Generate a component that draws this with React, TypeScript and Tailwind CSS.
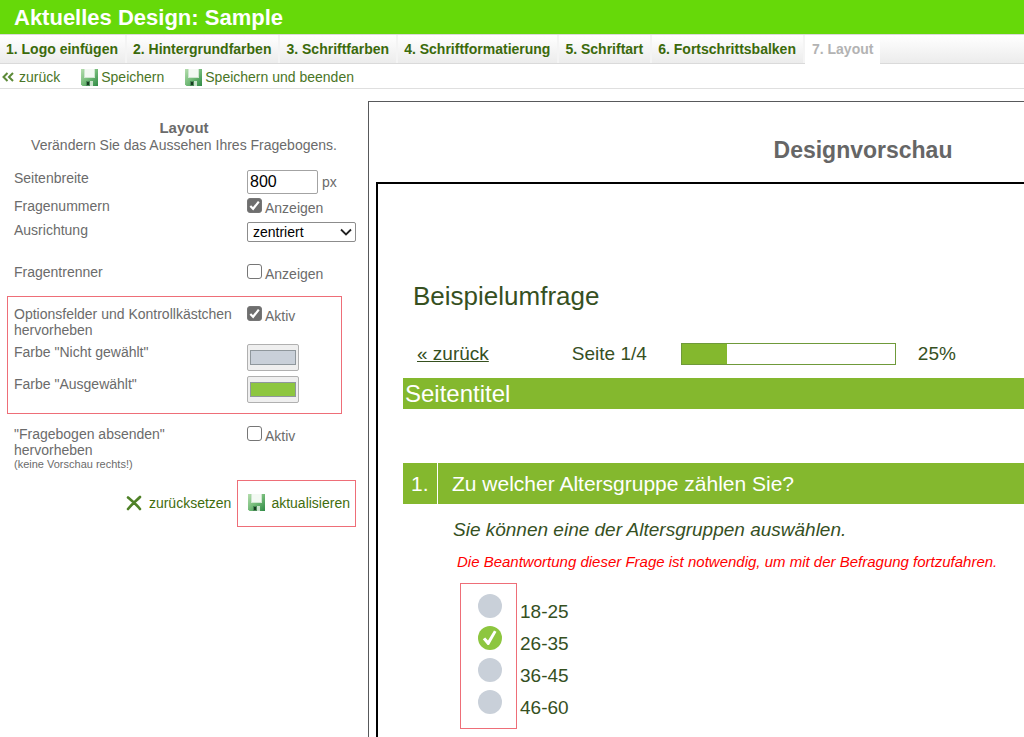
import { useState } from "react";

const tabs = [
  "1. Logo einfügen",
  "2. Hintergrundfarben",
  "3. Schriftfarben",
  "4. Schriftformatierung",
  "5. Schriftart",
  "6. Fortschrittsbalken",
];

const ageGroups = ["18-25", "26-35", "36-45", "46-60"];

const checkboxClass =
  "flex h-[15px] w-[15px] appearance-none items-center justify-center rounded-[3px] border border-[#767676] bg-white checked:bg-[#6e6e6e]";

const SaveIcon = () => (
  <svg viewBox="0 0 17 17" className="h-[17px] w-[17px] shrink-0" aria-hidden="true">
    <defs>
      <linearGradient id="disk" x1="0" y1="0" x2="1" y2="1">
        <stop offset="0" stopColor="#b5deae" />
        <stop offset="0.5" stopColor="#74bb79" />
        <stop offset="1" stopColor="#2f8a45" />
      </linearGradient>
    </defs>
    <path d="M0 0h17v17H1.5L0 15.5z" fill="url(#disk)" />
    <path d="M3 0h11v9H3z" fill="#cfe6d0" />
    <path d="M4 0h9v8H4z" fill="#f3f9f3" />
    <path d="M5 12h7v5H5z" fill="#4a8a58" />
    <path d="M9 12h3v5H9z" fill="#c9e3cc" />
    <path d="M6 13h2v3H6z" fill="#173a20" />
  </svg>
);

const CheckRow = ({ id, label, checked }: { id: string; label: string; checked?: boolean }) => {
  const [on, setOn] = useState(!!checked);

  return (
    <div className="flex items-start gap-[3px]">
      <span className="grid">
        <input
          id={id}
          type="checkbox"
          checked={on}
          onChange={() => setOn(!on)}
          className={`${checkboxClass} col-start-1 row-start-1`}
        />
        {on && (
          <svg viewBox="0 0 15 15" className="pointer-events-none col-start-1 row-start-1 h-[15px] w-[15px]">
            <path d="M3.3 8l2.8 2.8L11.8 3.6" fill="none" stroke="#fff" strokeWidth="2.2" />
          </svg>
        )}
      </span>
      <label htmlFor={id} className="pt-[2px]">{label}</label>
    </div>
  );
};

const ColorButton = ({ id, value }: { id: string; value: string }) => (
  <input
    id={id}
    type="color"
    defaultValue={value}
    className="block h-[27px] w-[52px] appearance-none rounded-xs border border-[#b0b0b0] bg-[#efefef] px-[2px] py-[5px] [&::-webkit-color-swatch]:rounded-none [&::-webkit-color-swatch]:border-[#8f979c] [&::-webkit-color-swatch-wrapper]:p-0"
  />
);

const SettingsPanel = () => (
  <form className="w-[368px] shrink-0 pt-[30px] text-[14px] leading-4 text-[#6b6b6b]" onSubmit={(e) => e.preventDefault()}>
    <div className="text-center">
      <h2 className="text-[15px] font-bold leading-[18px]">Layout</h2>
      <p>Verändern Sie das Aussehen Ihres Fragebogens.</p>
    </div>

    <div className="grid grid-cols-[233px_1fr] pl-[14px] pt-[17px]">
      <label htmlFor="width" className="h-7">Seitenbreite</label>
      <div className="flex items-start gap-1">
        <input
          id="width"
          type="text"
          defaultValue="800"
          className="h-6 w-[71px] rounded-xs border border-[#a3a3a3] px-[2px] text-[16px] text-black"
        />
        <label htmlFor="width" className="pt-1">px</label>
      </div>

      <span className="h-6">Fragenummern</span>
      <CheckRow id="numbers" label="Anzeigen" checked />

      <label htmlFor="align" className="h-[42px]">Ausrichtung</label>
      <div className="grid h-5 w-[109px]">
        <select
          id="align"
          defaultValue="zentriert"
          className="col-start-1 row-start-1 h-5 appearance-none rounded-xs border border-[#8c8c8c] bg-white pl-[5px] text-[14px] leading-4 text-black"
        >
          <option>links</option>
          <option>zentriert</option>
          <option>rechts</option>
        </select>
        <svg viewBox="0 0 12 8" className="pointer-events-none col-start-1 row-start-1 mr-1 h-2 w-3 self-center justify-self-end">
          <path d="M1 1.5l5 5 5-5" fill="none" stroke="#222" strokeWidth="1.8" />
        </svg>
      </div>

      <span>Fragentrenner</span>
      <CheckRow id="divider" label="Anzeigen" />
    </div>

    <div className="ml-[7px] mt-[14px] grid w-[335px] grid-cols-[233px_1fr] border border-[#ee6e78] pb-[10px] pl-[6px] pt-[9px]">
      <span className="h-[38px]">Optionsfelder und Kontrollkästchen hervorheben</span>
      <CheckRow id="highlight" label="Aktiv" checked />
      <label htmlFor="unselected" className="h-8">Farbe "Nicht gewählt"</label>
      <ColorButton id="unselected" value="#c9d0d9" />
      <label htmlFor="selected">Farbe "Ausgewählt"</label>
      <ColorButton id="selected" value="#8dc63f" />
    </div>

    <div className="grid grid-cols-[233px_1fr] pl-[14px] pt-3">
      <span>
        "Fragebogen absenden"
        <br />
        hervorheben
        <small className="block text-[11px] leading-3">(keine Vorschau rechts!)</small>
      </span>
      <CheckRow id="submit" label="Aktiv" />
    </div>

    <div className="mt-[10px] flex items-center justify-end pr-3 text-[#3f6d0e]">
      <button type="reset" className="flex items-center gap-[7px] pb-[2px] pr-[6px]">
        <svg viewBox="0 0 16 16" className="h-4 w-4" aria-hidden="true">
          <path d="M2 2.5C6 6 10 9 14 14M14 2C10 6 6 9 2 14" fill="none" stroke="#4f8127" strokeWidth="2.6" strokeLinecap="round" />
        </svg>
        zurücksetzen
      </button>
      <button type="submit" className="flex h-[47px] items-center gap-[6px] border border-[#ee6e78] pb-[2px] pl-[10px] pr-[5px]">
        <SaveIcon />
        aktualisieren
      </button>
    </div>
  </form>
);

const Preview = () => {
  const [age, setAge] = useState("26-35");

  return (
    <main className="mt-3 flex min-w-[982px] flex-1 flex-col border-l border-t border-[#58595b] pl-[7px] text-[19px] text-[#36501f]">
      <h2 className="pb-4 pt-8 text-center text-[23px] font-bold leading-8 text-[#666]">Designvorschau</h2>
      <div className="flex-1 border-l-2 border-t-2 border-black pl-[25px]">
        <h1 className="pl-[10px] pt-[96px] text-[26px] leading-8">Beispielumfrage</h1>

        <div className="flex h-[66px] items-center pl-[14px] pt-[18px]">
          <a href="#zurueck" className="underline">« zurück</a>
          <span className="pl-[83px]">Seite 1/4</span>
          <div className="ml-[34px] h-[22px] w-[215px] border border-[#6f9a3a]">
            <div className="h-full w-[45px] bg-[#84b82e]" />
          </div>
          <span className="pl-[22px]">25%</span>
        </div>

        <h2 className="bg-[#84b82e] pl-[2px] text-[24px] leading-[31px] text-white">Seitentitel</h2>

        <h3 className="mt-[54px] flex text-[21px] leading-[41px] text-white">
          <span className="w-[34px] bg-[#84b82e] pl-2">1.</span>
          <span className="ml-px flex-1 bg-[#84b82e] pl-[14px]">Zu welcher Altersgruppe zählen Sie?</span>
        </h3>

        <p className="pl-[50px] pt-[14px] italic leading-6">Sie können eine der Altersgruppen auswählen.</p>
        <p className="pl-[54px] pt-2 text-[15px] italic leading-6 text-[#f00]">
          Die Beantwortung dieser Frage ist notwendig, um mit der Befragung fortzufahren.
        </p>

        <div className="flex gap-[3px] pl-[57px] pt-[9px]">
          <div className="flex h-[146px] w-[57px] flex-col items-center gap-2 border border-[#ee6e78] pl-[3px] pt-[10px]">
            {ageGroups.map((g) => (
              <span key={g} className="grid">
                <input
                  id={g}
                  type="radio"
                  name="age"
                  checked={age === g}
                  onChange={() => setAge(g)}
                  className="col-start-1 row-start-1 h-6 w-6 appearance-none rounded-full bg-[#c9d0d9] checked:bg-[#8dc63f]"
                />
                {age === g && (
                  <svg viewBox="0 0 24 24" className="pointer-events-none col-start-1 row-start-1 h-6 w-6">
                    <path d="M4.8 13.2l2.4-1.8 2.8 3.2L16 4.4l2.5 1.3L11 19H9.6z" fill="#fff" />
                  </svg>
                )}
              </span>
            ))}
          </div>
          <div className="flex flex-col gap-2 pt-[17px]">
            {ageGroups.map((g) => (
              <label key={g} htmlFor={g} className="leading-6">{g}</label>
            ))}
          </div>
        </div>
      </div>
    </main>
  );
};

export default function App() {
  return (
    <div className="flex min-h-screen flex-col overflow-x-hidden bg-white font-['Liberation_Sans',Arial,sans-serif]">
      <header className="bg-[#66d909] pl-[14px] text-[22px] font-bold text-white">
        <h1 className="pt-[2px] leading-8">Aktuelles Design: Sample</h1>
      </header>

      <nav className="flex h-[30px] border-b border-t border-[#dadada] bg-linear-to-b from-white to-[#ececec] text-[14px] font-bold leading-7 text-[#3b6a0b]">
        {tabs.map((t) => (
          <a key={t} href="#tab" className="border-r-2 border-[#f4f4f4] pl-[6px] pr-[7px]">{t}</a>
        ))}
        <a href="#layout" className="mb-[-1px] bg-white px-[7px] text-[#b3b3b3]">7. Layout</a>
      </nav>

      <div className="flex h-[25px] items-center border-b border-[#dfdfdf] pt-[2px] text-[14px] text-[#4a7526]">
        <a href="#zurueck" className="flex items-center gap-[5px] pl-[2px]">
          <svg viewBox="0 0 12 10" className="h-[10px] w-3" aria-hidden="true">
            <path d="M5.5 1L1.5 5l4 4M11 1L7 5l4 4" fill="none" stroke="#5c8a38" strokeWidth="2" />
          </svg>
          zurück
        </a>
        <button className="ml-[21px] flex items-center gap-[3px]"><SaveIcon />Speichern</button>
        <button className="ml-[21px] flex items-center gap-[3px]"><SaveIcon />Speichern und beenden</button>
      </div>

      <div className="flex flex-1">
        <SettingsPanel />
        <Preview />
      </div>
    </div>
  );
}
